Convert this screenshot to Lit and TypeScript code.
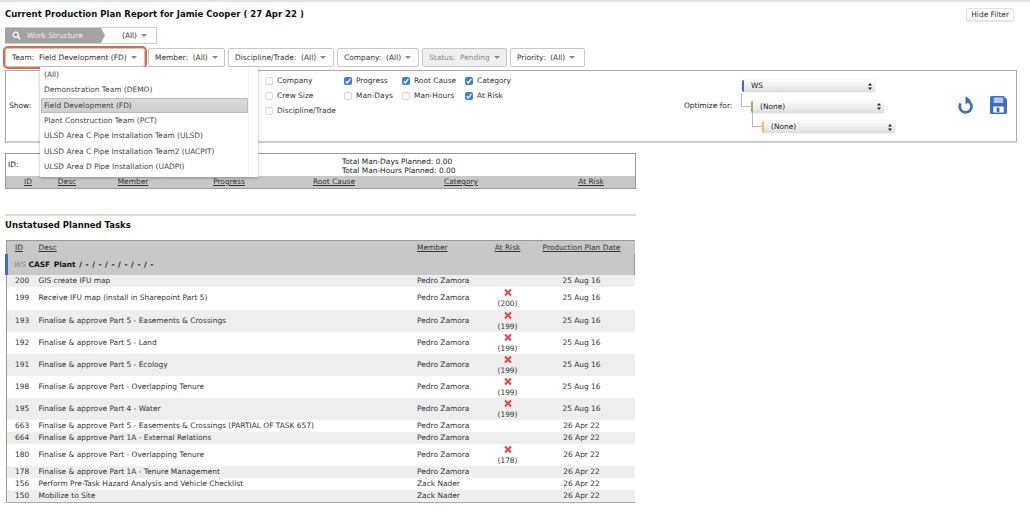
import {LitElement, html, css, svg} from 'lit';
import {customElement} from 'lit/decorators.js';

const teams = [
    '(All)',
    'Demonstration Team (DEMO)',
    'Field Development (FD)',
    'Plant Construction Team (PCT)',
    'ULSD Area C Pipe Installation Team (ULSD)',
    'ULSD Area C Pipe Installation Team2 (UACPIT)',
    'ULSD Area D Pipe Installation (UADPI)',
];

const filters = [
    {label: 'Member:', value: '(All)'},
    {label: 'Discipline/Trade:', value: '(All)'},
    {label: 'Company:', value: '(All)'},
    {label: 'Status:', value: 'Pending', disabled: true},
    {label: 'Priority:', value: '(All)'},
];

const checks = [
    {label: 'Company'}, {label: 'Progress', on: true}, {label: 'Root Cause', on: true}, {label: 'Category', on: true},
    {label: 'Crew Size'}, {label: 'Man-Days'}, {label: 'Man-Hours'}, {label: 'At Risk', on: true},
    {label: 'Discipline/Trade'},
];

const PZ = 'Pedro Zamora';
const ZN = 'Zack Nader';
const AUG = '25 Aug 16';
const APR = '26 Apr 22';

const tasks = [
    {id: 200, desc: 'GIS create IFU map', member: PZ, risk: '', date: AUG},
    {id: 199, desc: 'Receive IFU map (install in Sharepoint Part 5)', member: PZ, risk: '(200)', date: AUG},
    {id: 193, desc: 'Finalise & approve Part 5 - Easements & Crossings', member: PZ, risk: '(199)', date: AUG},
    {id: 192, desc: 'Finalise & approve Part 5 - Land', member: PZ, risk: '(199)', date: AUG},
    {id: 191, desc: 'Finalise & approve Part 5 - Ecology', member: PZ, risk: '(199)', date: AUG},
    {id: 198, desc: 'Finalise & approve Part - Overlapping Tenure', member: PZ, risk: '(199)', date: AUG},
    {id: 195, desc: 'Finalise & approve Part 4 - Water', member: PZ, risk: '(199)', date: AUG},
    {id: 663, desc: 'Finalise & approve Part 5 - Easements & Crossings (PARTIAL OF TASK 657)', member: PZ, risk: '', date: APR},
    {id: 664, desc: 'Finalise & approve Part 1A - External Relations', member: PZ, risk: '', date: APR},
    {id: 180, desc: 'Finalise & approve Part - Overlapping Tenure', member: PZ, risk: '(178)', date: APR},
    {id: 178, desc: 'Finalise & approve Part 1A - Tenure Management', member: PZ, risk: '', date: APR},
    {id: 156, desc: 'Perform Pre-Task Hazard Analysis and Vehicle Checklist', member: ZN, risk: '', date: APR},
    {id: 150, desc: 'Mobilize to Site', member: ZN, risk: '', date: APR},
];

const searchIcon = svg`<svg width="9" height="9" viewBox="0 0 9 9"><circle cx="3.7" cy="3.7" r="2.6" fill="none" stroke="#fff" stroke-width="1.3"/><path d="M5.6 5.6 8.3 8.3" stroke="#fff" stroke-width="1.5"/></svg>`;
const tick = svg`<svg width="8" height="8" viewBox="0 0 8 8"><path d="M1.8 4.2 3.4 6 6.3 1.9" fill="none" stroke="#fff" stroke-width="1.3"/></svg>`;
const cross = svg`<svg class="x" width="8" height="8" viewBox="0 0 8 8"><path d="M1 1 7 7M7 1 1 7" stroke="#ee4444" stroke-width="2"/></svg>`;
const updown = svg`<svg width="4" height="7" viewBox="0 0 4 7"><path d="M2 0 4 2.6H0ZM2 7 0 4.4H4Z" fill="#222"/></svg>`;
const refresh = svg`<svg width="16" height="18" viewBox="0 0 16 18"><path d="M9.300 4.900A5.900 5.900 0 1 1 2.600 7.400" fill="none" stroke="#3b6fc6" stroke-width="2.700"/><path d="M7.500 0 13 4.300 7.500 8.500Z" fill="#3b6fc6"/></svg>`;
const save = svg`<svg width="17" height="18" viewBox="0 0 18 18" preserveAspectRatio="none"><path d="M1.5 0H14.5L18 3.5V16.500A1.500 1.500 0 0 1 16.500 18H1.500A1.500 1.500 0 0 1 0 16.500V1.500A1.500 1.500 0 0 1 1.500 0Z" fill="#3b6fc6"/><rect x="4" y="1.500" width="10" height="5.500" fill="#b9c9e8"/><rect x="3.500" y="10.500" width="11" height="6" fill="#fff"/><rect x="7" y="11.500" width="3" height="4.500" fill="#3b6fc6"/></svg>`;

@customElement('app-root')
export class AppRoot extends LitElement {

    static override styles = css`
        :host {
            display: block;
            position: relative;
            height: 515px;
            overflow: hidden;
            background: #fff;
            color: #333;
            font-family: 'DejaVu Sans', Verdana, sans-serif;
            font-size: 7.45px;
            line-height: 12px;
        }
        .topline {
            height: 2px;
            background: #e4e4e4;
        }
        .head {
            display: flex;
            justify-content: space-between;
            align-items: flex-start;
            box-sizing: border-box;
            height: 25px;
            padding: 6px 16px 0 5px;
        }
        .title {
            font-size: 8.55px;
            font-weight: 700;
            color: #111;
            line-height: 12px;
        }
        .hide {
            height: 11px;
            line-height: 11px;
            padding: 0 4px;
            border: 1px solid #e2e2e2;
            border-radius: 2px;
            box-shadow: 0 1px 1px #e6e6e6;
        }
        .ws {
            display: flex;
            box-sizing: border-box;
            width: 152px;
            height: 17px;
            margin-left: 5px;
            border: 1px solid #ccc;
            border-left: none;
            background: #fff;
        }
        .ws-tag {
            display: flex;
            align-items: center;
            gap: 6px;
            width: 100px;
            box-sizing: border-box;
            padding-left: 7px;
            background: #a3a3a3;
            color: #eee;
            clip-path: polygon(0 0, 96px 0, 100px 50%, 96px 100%, 0 100%);
        }
        .ws-value {
            margin-left: 17px;
            line-height: 15px;
        }
        .caret {
            display: inline-block;
            width: 0;
            height: 0;
            margin-left: 4px;
            vertical-align: 1px;
            border-left: 3px solid transparent;
            border-right: 3px solid transparent;
            border-top: 3px solid #888;
        }
        .filters {
            display: grid;
            grid-template-columns: 140px 77px 106px 82px 85px 75px;
            gap: 3px;
            height: 20px;
            margin: 4px 0 2px 5px;
        }
        .filter {
            display: flex;
            align-items: center;
            box-sizing: border-box;
            height: 19px;
            padding: 0 6px;
            border: 1px solid #c8c8c8;
            border-radius: 2px;
            white-space: pre;
        }
        .filter.team {
            outline: 2px solid #e8693a;
            border-radius: 3px;
        }
        .filter.off {
            background: #efefef;
            color: #888;
        }
        .panel {
            display: flex;
            align-items: flex-start;
            box-sizing: border-box;
            width: 1012px;
            height: 73px;
            margin-left: 5px;
            border: 1px solid #aaa;
            border-bottom: 2px solid #ccc;
        }
        .show {
            align-self: center;
            width: 259px;
            padding-left: 3px;
            box-sizing: border-box;
            color: #222;
        }
        .checks {
            display: grid;
            grid-template-columns: 79px 58px 63px 55px;
            grid-auto-rows: 14.7px;
            padding-top: 3px;
            width: 255px;
        }
        .check {
            display: flex;
            align-items: center;
            gap: 4px;
            white-space: nowrap;
        }
        .box {
            display: block;
            box-sizing: border-box;
            width: 8px;
            height: 8px;
            border: 1px solid #d8d8d8;
            border-radius: 2px;
        }
        .box.on {
            border: none;
            background: #3b7fe0;
        }
        .box svg {
            display: block;
        }
        .optimize {
            align-self: center;
            margin-left: 164px;
            width: 58px;
            color: #222;
            white-space: nowrap;
        }
        .selects {
            display: flex;
            flex-direction: column;
            gap: 8.500px;
            width: 160px;
            padding-top: 9px;
        }
        .select {
            position: relative;
            display: flex;
            align-items: center;
            justify-content: space-between;
            box-sizing: border-box;
            width: 133px;
            height: 12px;
            padding: 0 3px 0 7px;
            border-left: 2px solid #3b6fc6;
            border-radius: 2px;
            background: linear-gradient(#fdfdfd, #ececec 60%, #dcdcdc);
            box-shadow: 0 0 1px #999;
            color: #222;
        }
        .select.l2 {
            margin-left: 9px;
            border-left-color: #7ec850;
        }
        .select.l3 {
            margin-left: 20px;
            border-left-color: #f5c242;
        }
        .select.l2::before,
        .select.l3::before {
            content: '';
            position: absolute;
            left: -12px;
            top: -8px;
            width: 10px;
            height: 13px;
            border-left: 1px solid #bbb;
            border-bottom: 1px solid #bbb;
        }
        .actions {
            display: flex;
            gap: 16px;
            align-items: center;
            align-self: center;
            margin: 0 0 2px 56px;
        }
        .actions svg {
            display: block;
        }
        .summary {
            box-sizing: border-box;
            width: 631px;
            height: 36px;
            margin: 10px 0 25px 5px;
            border: 1px solid #999;
        }
        .totals {
            display: flex;
            height: 22px;
        }
        .totals .id {
            align-self: center;
            width: 336px;
            padding-left: 2px;
            box-sizing: border-box;
            color: #222;
        }
        .totals .sum {
            line-height: 9.300px;
            padding-top: 3px;
            color: #222;
        }
        .cols {
            display: grid;
            grid-template-columns: 44px 34px 98px 94px 116px 138px 104px;
            height: 12px;
            background: #c8c8c8;
            text-align: center;
            text-decoration: underline;
        }
        .cols .last {
            padding-left: 18px;
        }
        hr {
            width: 631px;
            height: 2px;
            margin: 0 0 0 5px;
            border: none;
            background: #dcdcdc;
        }
        h2 {
            margin: 3px 0 9px 5px;
            font-size: 8.5px;
            line-height: 12px;
            font-weight: 700;
            color: #111;
        }
        table {
            width: 630px;
            margin-left: 5px;
            border-collapse: collapse;
            table-layout: fixed;
            border-top: 1px solid #999;
            border-left: 1px solid #999;
            border-bottom: 1px solid #aaa;
        }
        th {
            height: 13px;
            padding: 0;
            font-weight: 400;
            text-align: left;
            text-decoration: underline;
            background: #c8c8c8;
        }
        td {
            height: 12px;
            padding: 0;
            color: #333;
        }
        .c-id {
            padding-left: 8px;
        }
        .c-risk {
            text-align: center;
            line-height: 11.150px;
        }
        .c-date {
            text-align: center;
            padding-right: 4px;
        }
        .group td {
            height: 21.400px;
            background: #c8c8c8;
            color: #888;
            border-left: 3px solid #3b6fc6;
            border-right: 1px solid #999;
            padding-left: 6px;
        }
        .group b {
            color: #111;
            word-spacing: 1px;
        }
        tr.odd td {
            background: #eee;
        }
        .x {
            display: block;
            margin: 0 auto 1px;
            height: 10px;
            padding-top: 1px;
            box-sizing: border-box;
        }
        .menu {
            position: absolute;
            left: 40px;
            top: 67px;
            box-sizing: border-box;
            width: 218px;
            height: 110px;
            padding: 0 10px 0 1px;
            background: linear-gradient(to right, #fff 208px, #f2f2f2 208px, #f2f2f2 209px, #fff 209px);
            box-shadow: 0 1px 3px rgba(0, 0, 0, 0.3);
        }
        .menu div {
            box-sizing: border-box;
            height: 15.330px;
            line-height: 15px;
            padding-left: 3px;
            white-space: nowrap;
            color: #444;
        }
        .menu div.sel {
            background: linear-gradient(#dadada, #d0d0d0);
            border: 1px solid #bbb;
            padding-left: 2px;
            line-height: 13px;
        }
    `;

    override render() {
        return html`
        <div class="topline"></div>
        <div class="head">
            <span class="title">Current Production Plan Report for Jamie Cooper ( 27 Apr 22 )</span>
            <span class="hide">Hide Filter</span>
        </div>
        <div class="ws">
            <span class="ws-tag">${searchIcon}Work Structure</span>
            <span class="ws-value">(All)<span class="caret"></span></span>
        </div>
        <div class="filters">
            <span class="filter team">Team:  Field Development (FD)<span class="caret"></span></span>
            ${filters.map((f) => html`
                <span class="filter ${f.disabled ? 'off' : ''}">${f.label}  ${f.value}<span class="caret"></span></span>
            `)}
        </div>
        <div class="panel">
            <span class="show">Show:</span>
            <div class="checks">
                ${checks.map((c) => html`
                    <span class="check"><span class="box ${c.on ? 'on' : ''}">${c.on ? tick : ''}</span>${c.label}</span>
                `)}
            </div>
            <span class="optimize">Optimize for:</span>
            <div class="selects">
                <div class="select"><span>WS</span>${updown}</div>
                <div class="select l2"><span>(None)</span>${updown}</div>
                <div class="select l3"><span>(None)</span>${updown}</div>
            </div>
            <div class="actions">${refresh}${save}</div>
        </div>
        <div class="summary">
            <div class="totals">
                <span class="id">ID:</span>
                <div class="sum">Total Man-Days Planned: 0.00<br>Total Man-Hours Planned: 0.00</div>
            </div>
            <div class="cols">
                <span>ID</span><span>Desc</span><span>Member</span><span>Progress</span>
                <span>Root Cause</span><span>Category</span><span class="last">At Risk</span>
            </div>
        </div>
        <hr>
        <h2>Unstatused Planned Tasks</h2>
        <table>
            <colgroup>
                <col style="width:32px"><col style="width:378.500px"><col style="width:65.500px"><col style="width:50px"><col style="width:102px">
            </colgroup>
            <tr>
                <th class="c-id">ID</th><th>Desc</th><th>Member</th>
                <th class="c-risk">At Risk</th><th class="c-date">Production Plan Date</th>
            </tr>
            <tr class="group"><td colspan="5"><i>WS</i> <b>CASF Plant / - / - / - / - / - / -</b></td></tr>
            ${tasks.map((t, i) => html`
                <tr class="${i % 2 === 0 ? 'odd' : ''}">
                    <td class="c-id">${t.id}</td>
                    <td>${t.desc}</td>
                    <td>${t.member}</td>
                    <td class="c-risk">${t.risk ? html`${cross}${t.risk}` : ''}</td>
                    <td class="c-date">${t.date}</td>
                </tr>
            `)}
        </table>
        <div class="menu">
            ${teams.map((t, i) => html`<div class="${i === 2 ? 'sel' : ''}">${t}</div>`)}
        </div>
        `;
    }
}
